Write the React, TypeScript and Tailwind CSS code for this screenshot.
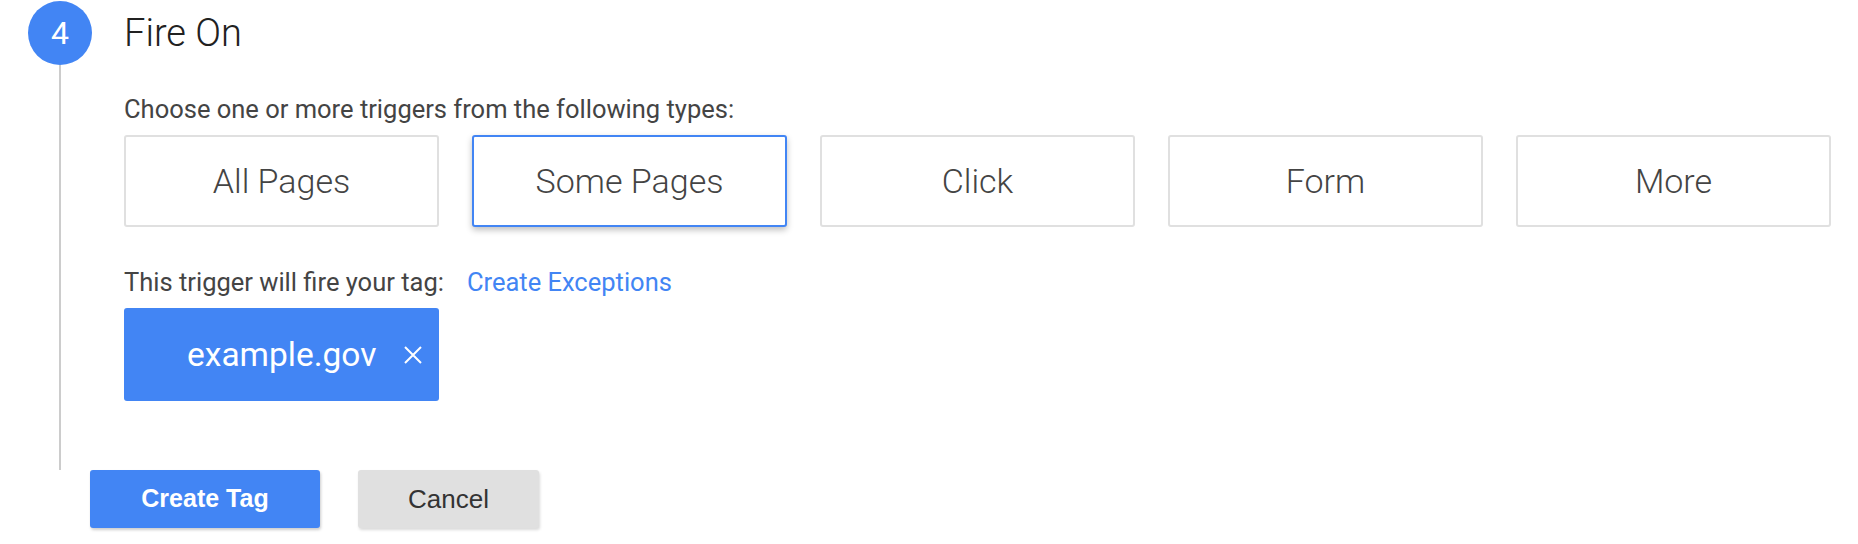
import React from 'react';

const triggers = ['All Pages', 'Some Pages', 'Click', 'Form', 'More'];

export default function App() {
  return (
    <div className="w-[1858px] h-[544px] bg-white font-['Roboto',sans-serif] text-[#444]">
      <div className="flex pl-[28px] pt-px">
        <div className="flex w-16 flex-col items-center">
          <div className="flex h-16 w-16 items-center justify-center rounded-full bg-[#4285f4] text-[32px] font-normal text-white">
            4
          </div>
          <div className="h-[405px] w-[2px] bg-[#cccccc]" />
        </div>

        <div className="ml-[32px] w-[1707px]">
          <div className="flex h-16 items-center text-[38px] font-light text-[#212121]">Fire On</div>
          <div className="mt-[32px] text-[25.5px] leading-[24px]">
            Choose one or more triggers from the following types:
          </div>
          <div className="mt-[14px] grid grid-cols-5 gap-[33px]">
            {triggers.map((t) => (
              <button
                key={t}
                className={
                  t === 'Some Pages'
                    ? 'flex h-[92px] items-center justify-center rounded-[3px] border-2 border-[#4285f4] bg-white text-[34px] font-light text-[#444] shadow-[0_3px_6px_rgba(0,0,0,0.25)]'
                    : 'flex h-[92px] items-center justify-center rounded-[3px] border-2 border-[#e0e0e0] bg-white text-[34px] font-light text-[#444]'
                }
              >
                {t}
              </button>
            ))}
          </div>
          <div className="mt-[43px] flex text-[25.5px] leading-[25px]">
            <span>This trigger will fire your tag:</span>
            <span className="ml-[23px] text-[#4285f4]">Create Exceptions</span>
          </div>
          <div className="mt-[13px] flex h-[93px] w-[315px] items-center rounded-[3px] bg-[#4285f4] pl-[63px] text-white">
            <span className="text-[33.5px] leading-none">example.gov</span>
            <svg className="ml-[28px]" width="18" height="18" viewBox="0 0 18 18">
              <path d="M1 1L17 17M17 1L1 17" stroke="white" strokeWidth="2" />
            </svg>
          </div>
        </div>
      </div>

      <div className="flex gap-[38px] pl-[90px] font-['Liberation_Sans',Arial,sans-serif]">
        <button className="h-[58px] w-[230px] rounded-[3px] bg-[#4285f4] text-[25px] font-bold text-white shadow-[1px_2px_3px_rgba(0,0,0,0.2)]">
          Create Tag
        </button>
        <button className="h-[58px] w-[181px] rounded-[3px] bg-[#e0e0e0] text-[26px] text-[#333] shadow-[1px_2px_3px_rgba(0,0,0,0.15)]">
          Cancel
        </button>
      </div>
    </div>
  );
}
